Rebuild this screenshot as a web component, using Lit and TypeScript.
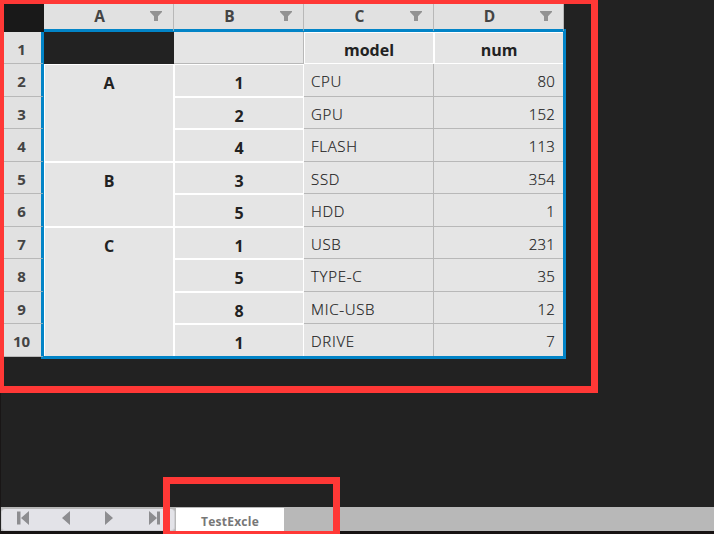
import { LitElement, html, css, svg } from "lit";
import { customElement } from "lit/decorators.js";

interface Row { group?: string; span?: number; sub: string; model: string; num: number; }

const ROWS: Row[] = [
  { group: "A", span: 3, sub: "1", model: "CPU", num: 80 },
  { sub: "2", model: "GPU", num: 152 },
  { sub: "4", model: "FLASH", num: 113 },
  { group: "B", span: 2, sub: "3", model: "SSD", num: 354 },
  { sub: "5", model: "HDD", num: 1 },
  { group: "C", span: 4, sub: "1", model: "USB", num: 231 },
  { sub: "5", model: "TYPE-C", num: 35 },
  { sub: "8", model: "MIC-USB", num: 12 },
  { sub: "1", model: "DRIVE", num: 7 },
];

@customElement("sheet-grid")
export class SheetGrid extends LitElement {
  static styles = css`
    :host {
      display: grid;
      position: relative;
      width: 560px;
      grid-template-columns: 40px repeat(4, 130px);
      grid-template-rows: 28px 32px 33px 32px 33px 32px 33px 32px 33px 32px 33px;
      color: #222;
      font: 15px/20px "Open Sans", "Noto Sans", sans-serif;
    }
    div { box-sizing: border-box; }
    .corner { grid-area: 1 / 1; background: #191919; z-index: 2; }
    .col, .num { background: #e1e1e1; color: #444; font-weight: 700; position: relative; }
    .col { grid-row: 1; display: flex; align-items: center; padding: 0 11px 4px 5px; border-right: 1px solid #b8b8b8; }
    .col span { flex: 1; text-align: center; font-size: 15.5px; }
    .num { grid-column: 1; text-align: center; padding: 7px 5px 0 0; border-bottom: 1px solid #b8b8b8; }
    .num::after { content: ""; position: absolute; z-index: 3; right: 1px; bottom: -1px; width: 2px; height: 1px; background: #83aebf; }
    .col::after { content: ""; position: absolute; z-index: 3; right: -1px; bottom: 1px; width: 1px; height: 2px; background: #83aebf; }
    .cell { background: #e5e5e5; border: 0 solid #b8b8b8; border-width: 0 1px 1px 0; padding: 7px 8px 0 7px; font-weight: 300; -webkit-text-stroke: .2px #222; }
    .right { text-align: right; letter-spacing: .15px; }
    .head { border: 1px solid #fff; font-weight: 700; font-size: 16px; text-align: center; padding: 8px 0 0; -webkit-text-stroke: 0; }
    .title { padding-top: 7px; }
    .text { white-space: nowrap; letter-spacing: .7px; }
    .blank { background: #222; border: 0; }
    .selection { position: absolute; left: 37px; top: 25px; width: 525px; height: 330px; border: 3px solid #0284c7; z-index: 1; pointer-events: none; }
  `;
  private filter() {
    return svg`<svg width="12" height="10" viewBox="0 0 12 10"><path d="M0 0h12v1L8 5.3V10H4V5.3L0 1z" fill="#929292"/></svg>`;
  }
  render() {
    return html`
      <div class="corner"></div>
      ${["A", "B", "C", "D"].map((c) => html`<div class="col"><span>${c}</span>${this.filter()}</div>`)}
      <div class="num" style="grid-row:2">1</div>
      <div class="blank" style="grid-area:2/2"></div>
      <div class="cell" style="grid-area:2/3"></div>
      <div class="cell head title" style="grid-area:2/4">model</div>
      <div class="cell head title" style="grid-area:2/5">num</div>
      ${ROWS.map((r, i) => html`
        <div class="num" style="grid-row:${i + 3}">${i + 2}</div>
        ${r.group ? html`<div class="cell head" style="grid-area:${i + 3}/2/span ${r.span}">${r.group}</div>` : ""}
        <div class="cell head" style="grid-area:${i + 3}/3">${r.sub}</div>
        <div class="cell text" style="grid-area:${i + 3}/4">${r.model}</div>
        <div class="cell right" style="grid-area:${i + 3}/5">${r.num}</div>`)}
      <div class="selection"></div>`;
  }
}

@customElement("app-root")
export class AppRoot extends LitElement {
  static styles = css`
    :host { display: flex; flex-direction: column; position: relative; box-sizing: border-box; width: 714px; height: 534px; overflow: hidden; background: #222; }
    .body { flex: 1; box-sizing: border-box; padding: 4px 0 0 3px; border-left: 1px solid #191616; }
    .bar { display: flex; box-sizing: border-box; height: 24px; margin-left: 1px; background: #b8b8b8; padding-top: 1px; }
    .foot { height: 3px; background: #171313; }
    .nav { width: 174px; height: 22px; box-sizing: border-box; margin-right: 1px; background: #e3e3e8; border-radius: 4px; border: 1px solid #d0d0d4; border-top: 0; margin-top: 1px; }
    .nav svg { display: block; margin-left: -1px; }
    .tab { width: 108px; box-sizing: border-box; padding-top: 1px; background: #fff; color: #777; text-align: center; font: 700 12px/26px "Open Sans", "Noto Sans", sans-serif; letter-spacing: .25px; }
    .mark { position: absolute; box-sizing: border-box; border: 7px solid #ff3836; z-index: 5; }
    .table-mark { left: -3px; top: -3px; width: 601px; height: 396px; }
    .tab-mark { left: 163px; top: 477px; width: 177px; height: 61px; }
  `;
  render() {
    return html`
      <div class="body"><sheet-grid></sheet-grid></div>
      <div class="bar">
        <div class="nav">
          <svg width="174" height="21" viewBox="1 509 174 21" fill="#8d8d90">
            <path d="M17 511.5h3.5v13H17zM29 511v14l-8-7zM70 511v14l-8-7zM105 511v14l8-7zM149 511v14l8-7zM157 511.5h3v13h-3z"/>
          </svg>
        </div>
        <div class="tab">TestExcle</div>
      </div>
      <div class="foot"></div>
      <div class="mark table-mark"></div>
      <div class="mark tab-mark"></div>`;
  }
}
